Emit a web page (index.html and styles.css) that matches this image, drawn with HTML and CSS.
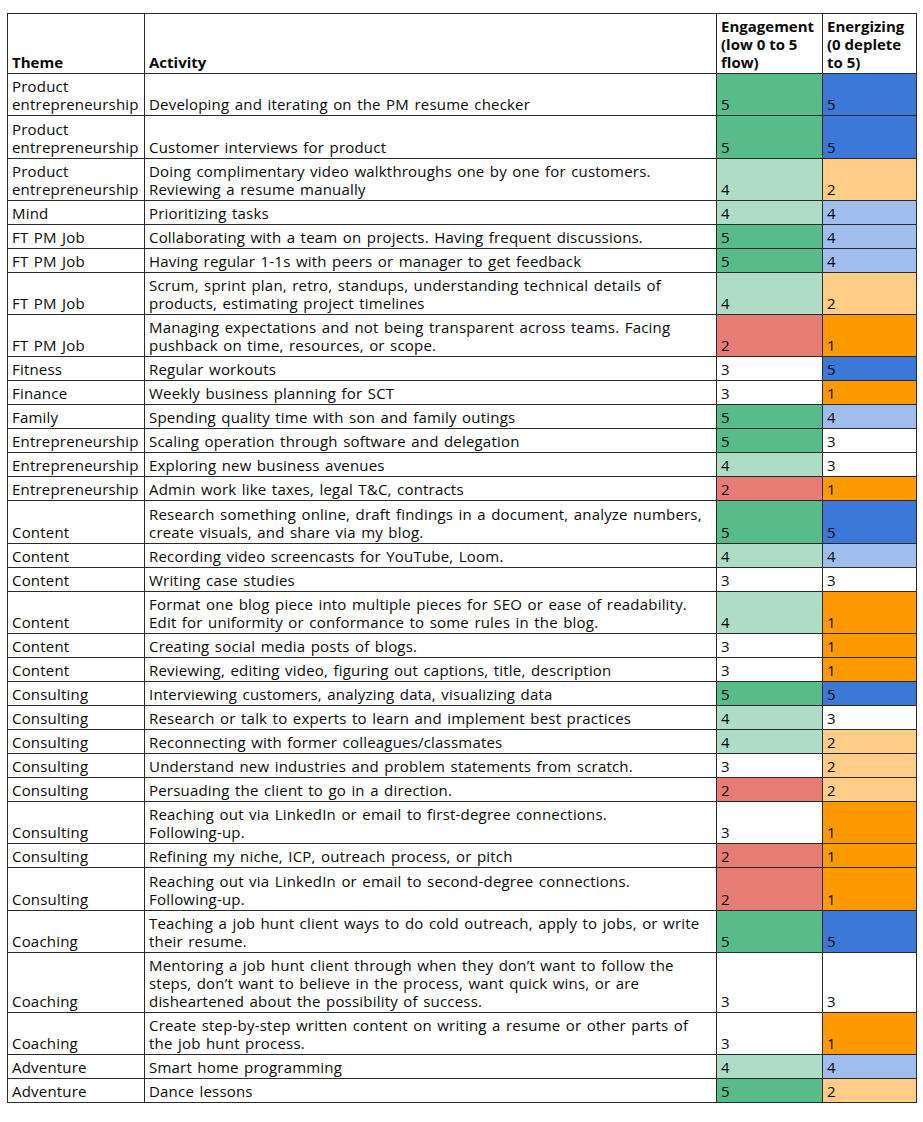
FILE: index.html
```html
<!DOCTYPE html>
<html lang="en">
<head>
<meta charset="utf-8">
<title>Activity energy audit</title>
<link rel="stylesheet" href="styles.css">
</head>
<body>
<table class="sheet">
  <colgroup>
    <col class="c-theme"><col class="c-act"><col class="c-eng"><col class="c-ene">
  </colgroup>
  <thead>
    <tr class="l3">
      <th>Theme</th>
      <th>Activity</th>
      <th>Engagement<br>(low 0 to 5<br>flow)</th>
      <th>Energizing<br>(0 deplete<br>to 5)</th>
    </tr>
  </thead>
  <tbody>
    <tr class="l2"><td>Product<br>entrepreneurship</td><td>Developing and iterating on the PM resume checker</td><td class="g5">5</td><td class="b5">5</td></tr>
    <tr class="l2"><td>Product<br>entrepreneurship</td><td>Customer interviews for product</td><td class="g5">5</td><td class="b5">5</td></tr>
    <tr class="l2"><td>Product<br>entrepreneurship</td><td>Doing complimentary video walkthroughs one by one for customers.<br>Reviewing a resume manually</td><td class="g4">4</td><td class="o2">2</td></tr>
    <tr><td>Mind</td><td>Prioritizing tasks</td><td class="g4">4</td><td class="b4">4</td></tr>
    <tr><td>FT PM Job</td><td>Collaborating with a team on projects. Having frequent discussions.</td><td class="g5">5</td><td class="b4">4</td></tr>
    <tr><td>FT PM Job</td><td>Having regular 1-1s with peers or manager to get feedback</td><td class="g5">5</td><td class="b4">4</td></tr>
    <tr class="l2"><td>FT PM Job</td><td>Scrum, sprint plan, retro, standups, understanding technical details of<br>products, estimating project timelines</td><td class="g4">4</td><td class="o2">2</td></tr>
    <tr class="l2"><td>FT PM Job</td><td>Managing expectations and not being transparent across teams. Facing<br>pushback on time, resources, or scope.</td><td class="r2">2</td><td class="o1">1</td></tr>
    <tr><td>Fitness</td><td>Regular workouts</td><td>3</td><td class="b5">5</td></tr>
    <tr><td>Finance</td><td>Weekly business planning for SCT</td><td>3</td><td class="o1">1</td></tr>
    <tr><td>Family</td><td>Spending quality time with son and family outings</td><td class="g5">5</td><td class="b4">4</td></tr>
    <tr><td>Entrepreneurship</td><td>Scaling operation through software and delegation</td><td class="g5">5</td><td>3</td></tr>
    <tr><td>Entrepreneurship</td><td>Exploring new business avenues</td><td class="g4">4</td><td>3</td></tr>
    <tr><td>Entrepreneurship</td><td>Admin work like taxes, legal T&amp;C, contracts</td><td class="r2">2</td><td class="o1">1</td></tr>
    <tr class="l2"><td>Content</td><td>Research something online, draft findings in a document, analyze numbers,<br>create visuals, and share via my blog.</td><td class="g5">5</td><td class="b5">5</td></tr>
    <tr><td>Content</td><td>Recording video screencasts for YouTube, Loom.</td><td class="g4">4</td><td class="b4">4</td></tr>
    <tr><td>Content</td><td>Writing case studies</td><td>3</td><td>3</td></tr>
    <tr class="l2"><td>Content</td><td>Format one blog piece into multiple pieces for SEO or ease of readability.<br>Edit for uniformity or conformance to some rules in the blog.</td><td class="g4">4</td><td class="o1">1</td></tr>
    <tr><td>Content</td><td>Creating social media posts of blogs.</td><td>3</td><td class="o1">1</td></tr>
    <tr><td>Content</td><td>Reviewing, editing video, figuring out captions, title, description</td><td>3</td><td class="o1">1</td></tr>
    <tr><td>Consulting</td><td>Interviewing customers, analyzing data, visualizing data</td><td class="g5">5</td><td class="b5">5</td></tr>
    <tr><td>Consulting</td><td>Research or talk to experts to learn and implement best practices</td><td class="g4">4</td><td>3</td></tr>
    <tr><td>Consulting</td><td>Reconnecting with former colleagues/classmates</td><td class="g4">4</td><td class="o2">2</td></tr>
    <tr><td>Consulting</td><td>Understand new industries and problem statements from scratch.</td><td>3</td><td class="o2">2</td></tr>
    <tr><td>Consulting</td><td>Persuading the client to go in a direction.</td><td class="r2">2</td><td class="o2">2</td></tr>
    <tr class="l2"><td>Consulting</td><td>Reaching out via LinkedIn or email to first-degree connections.<br>Following-up.</td><td>3</td><td class="o1">1</td></tr>
    <tr><td>Consulting</td><td>Refining my niche, ICP, outreach process, or pitch</td><td class="r2">2</td><td class="o1">1</td></tr>
    <tr class="l2"><td>Consulting</td><td>Reaching out via LinkedIn or email to second-degree connections.<br>Following-up.</td><td class="r2">2</td><td class="o1">1</td></tr>
    <tr class="l2"><td>Coaching</td><td>Teaching a job hunt client ways to do cold outreach, apply to jobs, or write<br>their resume.</td><td class="g5">5</td><td class="b5">5</td></tr>
    <tr class="l3"><td>Coaching</td><td>Mentoring a job hunt client through when they don’t want to follow the<br>steps, don’t want to believe in the process, want quick wins, or are<br>disheartened about the possibility of success.</td><td>3</td><td>3</td></tr>
    <tr class="l2"><td>Coaching</td><td>Create step-by-step written content on writing a resume or other parts of<br>the job hunt process.</td><td>3</td><td class="o1">1</td></tr>
    <tr><td>Adventure</td><td>Smart home programming</td><td class="g4">4</td><td class="b4">4</td></tr>
    <tr><td>Adventure</td><td>Dance lessons</td><td class="g5">5</td><td class="o2">2</td></tr>
  </tbody>
</table>
</body>
</html>
```
FILE: styles.css
```css
html, body {
  margin: 0;
  padding: 0;
  background: #ffffff;
}

body {
  font-family: "Open Sans", "Noto Sans", "Liberation Sans", sans-serif;
  font-size: 15px;
  color: #0a0a0a;
}

.sheet {
  margin: 13px 0 0 7px;
  border-collapse: collapse;
  table-layout: fixed;
  width: 909px;
}

.c-theme { width: 137px; }
.c-act { width: 572px; }
.c-eng { width: 106px; }
.c-ene { width: 94px; }

.sheet th,
.sheet td {
  border: 1px solid #2a2a2a;
  padding: 3px 4px 2px 4px;
  line-height: 18px;
  height: 18px;
  vertical-align: bottom;
  text-align: left;
  white-space: nowrap;
  overflow: hidden;
}

.sheet td {
  letter-spacing: 0.2px;
  word-spacing: 1.3px;
}

.sheet th {
  font-weight: 700;
}

.sheet tr.l2 td { height: 36.3px; }
.sheet tr.l3 td { height: 54px; }
.sheet thead tr.l3 th { height: 53px; }

.g5 { background: #57bb8a; }
.g4 { background: #aedcc4; }
.r2 { background: #e67c73; }
.b5 { background: #3c78d8; }
.b4 { background: #a0beed; }
.o1 { background: #ff9900; }
.o2 { background: #ffcd87; }
```
